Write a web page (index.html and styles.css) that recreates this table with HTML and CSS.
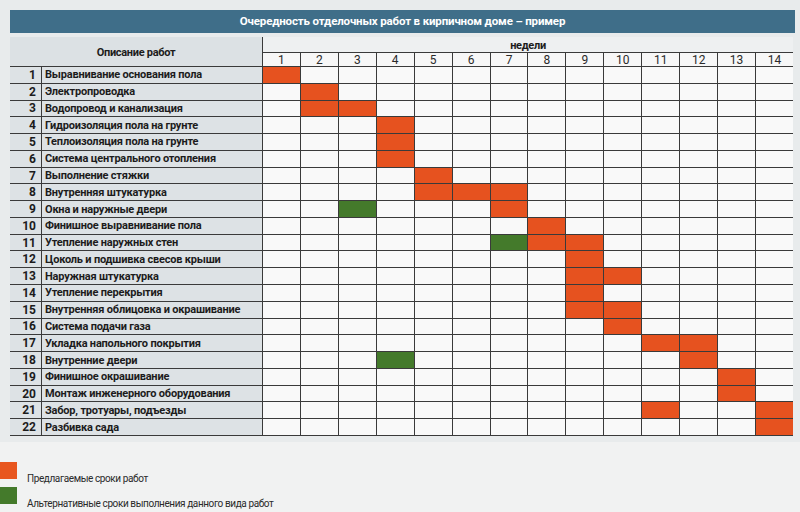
FILE: index.html
```html
<!DOCTYPE html>
<html lang="ru">
<head>
<meta charset="utf-8">
<title>Очередность отделочных работ</title>
<link rel="stylesheet" href="styles.css">
</head>
<body>
<div class="panel">
  <div class="sheet">
    <div class="title">Очередность отделочных работ в кирпичном доме – пример</div>
    <div class="chart">
      <div class="h-desc">Описание работ</div>
      <div class="h-weeks">недели</div>
      <div class="wk">1</div><div class="wk">2</div><div class="wk">3</div><div class="wk">4</div><div class="wk">5</div><div class="wk">6</div><div class="wk">7</div><div class="wk">8</div><div class="wk">9</div><div class="wk">10</div><div class="wk">11</div><div class="wk">12</div><div class="wk">13</div><div class="wk">14</div>

      <div class="n">1</div><div class="d">Выравнивание основания пола</div>
      <b class="o"></b><b></b><b></b><b></b><b></b><b></b><b></b><b></b><b></b><b></b><b></b><b></b><b></b><b></b>

      <div class="n">2</div><div class="d">Электропроводка</div>
      <b></b><b class="o"></b><b></b><b></b><b></b><b></b><b></b><b></b><b></b><b></b><b></b><b></b><b></b><b></b>

      <div class="n">3</div><div class="d">Водопровод и канализация</div>
      <b></b><b class="o"></b><b class="o"></b><b></b><b></b><b></b><b></b><b></b><b></b><b></b><b></b><b></b><b></b><b></b>

      <div class="n">4</div><div class="d">Гидроизоляция пола на грунте</div>
      <b></b><b></b><b></b><b class="o"></b><b></b><b></b><b></b><b></b><b></b><b></b><b></b><b></b><b></b><b></b>

      <div class="n">5</div><div class="d">Теплоизоляция пола на грунте</div>
      <b></b><b></b><b></b><b class="o"></b><b></b><b></b><b></b><b></b><b></b><b></b><b></b><b></b><b></b><b></b>

      <div class="n">6</div><div class="d">Система центрального отопления</div>
      <b></b><b></b><b></b><b class="o"></b><b></b><b></b><b></b><b></b><b></b><b></b><b></b><b></b><b></b><b></b>

      <div class="n">7</div><div class="d">Выполнение стяжки</div>
      <b></b><b></b><b></b><b></b><b class="o"></b><b></b><b></b><b></b><b></b><b></b><b></b><b></b><b></b><b></b>

      <div class="n">8</div><div class="d">Внутренняя штукатурка</div>
      <b></b><b></b><b></b><b></b><b class="o"></b><b class="o"></b><b class="o"></b><b></b><b></b><b></b><b></b><b></b><b></b><b></b>

      <div class="n">9</div><div class="d">Окна и наружные двери</div>
      <b></b><b></b><b class="g"></b><b></b><b></b><b></b><b class="o"></b><b></b><b></b><b></b><b></b><b></b><b></b><b></b>

      <div class="n">10</div><div class="d">Финишное выравнивание пола</div>
      <b></b><b></b><b></b><b></b><b></b><b></b><b></b><b class="o"></b><b></b><b></b><b></b><b></b><b></b><b></b>

      <div class="n">11</div><div class="d">Утепление наружных стен</div>
      <b></b><b></b><b></b><b></b><b></b><b></b><b class="g"></b><b class="o"></b><b class="o"></b><b></b><b></b><b></b><b></b><b></b>

      <div class="n">12</div><div class="d">Цоколь и подшивка свесов крыши</div>
      <b></b><b></b><b></b><b></b><b></b><b></b><b></b><b></b><b class="o"></b><b></b><b></b><b></b><b></b><b></b>

      <div class="n">13</div><div class="d">Наружная штукатурка</div>
      <b></b><b></b><b></b><b></b><b></b><b></b><b></b><b></b><b class="o"></b><b class="o"></b><b></b><b></b><b></b><b></b>

      <div class="n">14</div><div class="d">Утепление перекрытия</div>
      <b></b><b></b><b></b><b></b><b></b><b></b><b></b><b></b><b class="o"></b><b></b><b></b><b></b><b></b><b></b>

      <div class="n">15</div><div class="d">Внутренняя облицовка и окрашивание</div>
      <b></b><b></b><b></b><b></b><b></b><b></b><b></b><b></b><b class="o"></b><b class="o"></b><b></b><b></b><b></b><b></b>

      <div class="n">16</div><div class="d">Система подачи газа</div>
      <b></b><b></b><b></b><b></b><b></b><b></b><b></b><b></b><b></b><b class="o"></b><b></b><b></b><b></b><b></b>

      <div class="n">17</div><div class="d">Укладка напольного покрытия</div>
      <b></b><b></b><b></b><b></b><b></b><b></b><b></b><b></b><b></b><b></b><b class="o"></b><b class="o"></b><b></b><b></b>

      <div class="n">18</div><div class="d">Внутренние двери</div>
      <b></b><b></b><b></b><b class="g"></b><b></b><b></b><b></b><b></b><b></b><b></b><b></b><b class="o"></b><b></b><b></b>

      <div class="n">19</div><div class="d">Финишное окрашивание</div>
      <b></b><b></b><b></b><b></b><b></b><b></b><b></b><b></b><b></b><b></b><b></b><b></b><b class="o"></b><b></b>

      <div class="n">20</div><div class="d">Монтаж инженерного оборудования</div>
      <b></b><b></b><b></b><b></b><b></b><b></b><b></b><b></b><b></b><b></b><b></b><b></b><b class="o"></b><b></b>

      <div class="n">21</div><div class="d">Забор, тротуары, подъезды</div>
      <b></b><b></b><b></b><b></b><b></b><b></b><b></b><b></b><b></b><b></b><b class="o"></b><b></b><b></b><b class="o"></b>

      <div class="n">22</div><div class="d">Разбивка сада</div>
      <b></b><b></b><b></b><b></b><b></b><b></b><b></b><b></b><b></b><b></b><b></b><b></b><b></b><b class="o"></b>
    </div>
  </div>
</div>
<div class="legend">
  <div class="item"><span class="swatch o"></span><span class="label">Предлагаемые сроки работ</span></div>
  <div class="item"><span class="swatch g"></span><span class="label">Альтернативные сроки выполнения данного вида работ</span></div>
</div>
</body>
</html>
```
FILE: styles.css
```css
html, body {
  margin: 0;
  padding: 0;
}
body {
  width: 800px;
  height: 512px;
  overflow: hidden;
  background: #f1f2f2;
  font-family: Roboto, "DejaVu Sans Condensed", "Liberation Sans", sans-serif;
  color: #1c1c1c;
}
.panel {
  background: #e8ebec;
  padding: 10px 0 6px 10px;
}
.sheet {
  width: 785px;
}
.title {
  height: 23px;
  background: #3f6e89;
  color: #fff;
  font-weight: bold;
  font-size: 11.5px;
  letter-spacing: -0.15px;
  line-height: 23px;
  text-align: center;
}
.chart {
  margin-top: 4px;
  width: 783px;
  height: 399px;
  display: grid;
  grid-template-columns: 31px 220px repeat(14, 1fr);
  grid-template-rows: 15px 13px repeat(22, 1fr);
  gap: 1px;
  background: #3a3a3a;
  border-bottom: 1px solid #3a3a3a;
  box-sizing: border-box;
}
.h-desc {
  grid-column: 1 / 3;
  grid-row: 1 / 3;
  background: #dce1e4;
  font-weight: bold;
  font-size: 11px;
  letter-spacing: -0.3px;
  display: flex;
  align-items: center;
  justify-content: center;
  padding-top: 1px;
}
.h-weeks {
  grid-column: 3 / 17;
  grid-row: 1;
  background: #eef0f1;
  font-weight: bold;
  font-size: 11px;
  letter-spacing: -0.3px;
  text-align: center;
  line-height: 18px;
}
.wk {
  background: #f7f7f7;
  font-size: 12px;
  text-align: center;
  line-height: 14px;
  color: #2a2a2a;
}
.n, .d {
  background: #dde2e5;
  font-weight: bold;
  font-size: 11px;
  letter-spacing: -0.2px;
  display: flex;
  align-items: center;
  white-space: nowrap;
}
.n {
  justify-content: flex-end;
  padding-right: 5px;
  font-size: 12px;
  letter-spacing: 0;
}
.d {
  padding-left: 3px;
}
.chart b {
  display: block;
  background: #f9f9f9;
}
.chart b.o {
  background: #e6521f;
}
.chart b.g {
  background: #447a2b;
}
.legend {
  padding-top: 20px;
  display: flex;
  flex-direction: column;
  gap: 8px;
}
.item {
  display: flex;
  align-items: flex-end;
  height: 17px;
  font-size: 10px;
  letter-spacing: -0.4px;
  color: #2a2a2a;
}
.swatch {
  width: 17px;
  height: 17px;
  margin-right: 10px;
  flex: none;
}
.swatch.o { background: #e8561f; }
.swatch.g { background: #447a2b; }
.label {
  position: relative;
  top: 5px;
}
```
